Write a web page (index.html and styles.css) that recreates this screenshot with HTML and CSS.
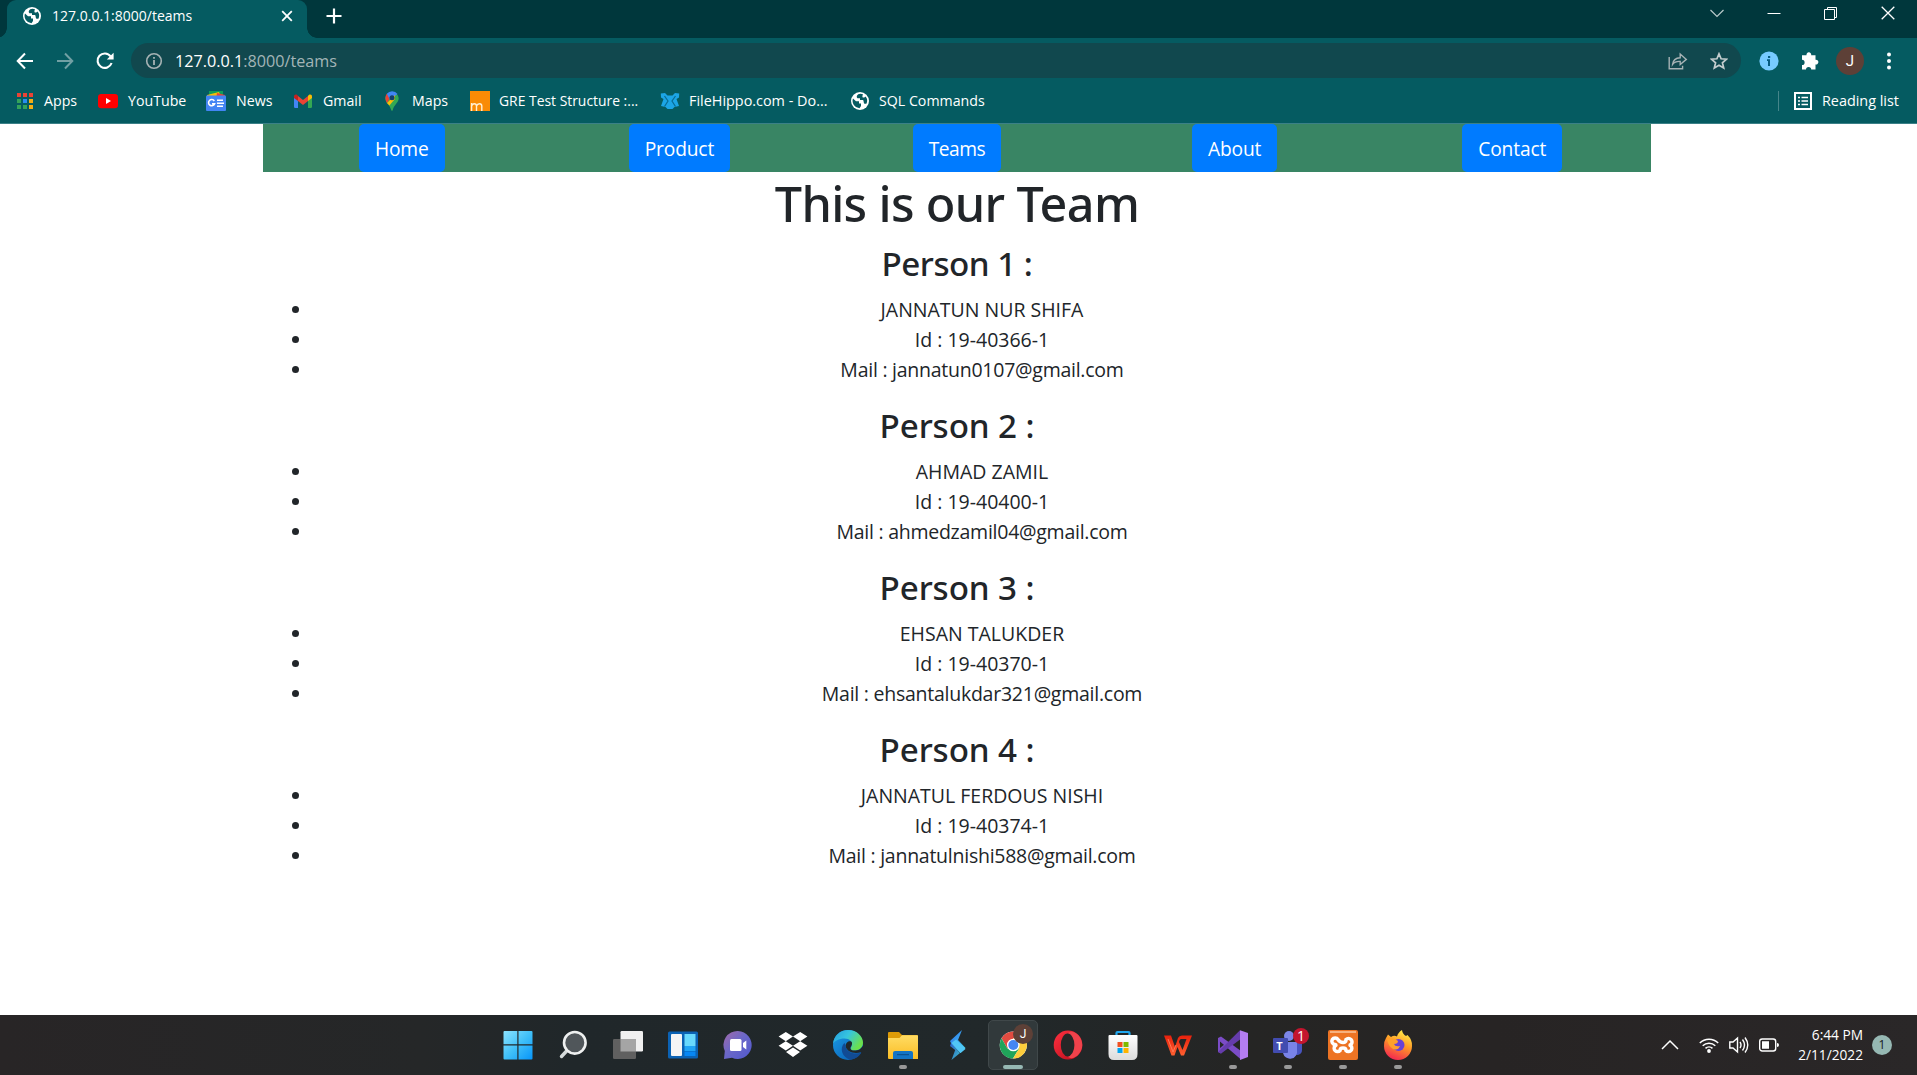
FILE: index.html
```html
<!DOCTYPE html>
<html lang="en">
<head>
<meta charset="utf-8">
<title>127.0.0.1:8000/teams</title>
<link rel="stylesheet" href="styles.css">
</head>
<body>
<svg width="0" height="0" class="defs" aria-hidden="true">
  <defs>
    <symbol id="globe" viewBox="0 0 18 18">
      <circle cx="9" cy="9" r="9" fill="#fff"/>
      <path d="M2 6.5 L5 9.2 H8 V11.5 H10 V14 L8.5 16.2 A7.3 7.3 0 0 1 2 6.5Z M7.2 2.2 C5.5 3.6 5.2 5.3 6.5 6.3 H9 V8 H12 C13 9 12.3 10.5 13.4 11.8 H15.4 A7.3 7.3 0 0 0 14.7 4.5 C13.5 6.2 11.5 5.8 11.4 4.4 C11.5 3.2 12 2.5 12 2.3 A7.3 7.3 0 0 0 7.2 2.2Z" fill="#055b61"/>
    </symbol>
    <linearGradient id="win" x1="0" y1="0" x2="1" y2="1"><stop offset="0" stop-color="#8ce3ff"/><stop offset=".5" stop-color="#41c0f8"/><stop offset="1" stop-color="#0795f9"/></linearGradient>
    <linearGradient id="chat" x1="0" y1="0" x2="1" y2="1"><stop offset="0" stop-color="#a269a8"/><stop offset=".45" stop-color="#6c68c8"/><stop offset="1" stop-color="#4f58cf"/></linearGradient>
    <linearGradient id="edgeTop" x1="0" y1="0" x2="1" y2=".5"><stop offset="0" stop-color="#249bde"/><stop offset=".5" stop-color="#36c5df"/><stop offset="1" stop-color="#6be04c"/></linearGradient>
    <linearGradient id="edgeBlue" x1="0" y1="0" x2="1" y2="1"><stop offset="0" stop-color="#1b9ce6"/><stop offset="1" stop-color="#0758ae"/></linearGradient>
    <linearGradient id="folder" x1="0" y1="0" x2="0" y2="1"><stop offset="0" stop-color="#ffdc64"/><stop offset="1" stop-color="#fbbd24"/></linearGradient>
    <linearGradient id="bolt" x1="0" y1="0" x2="1" y2="1"><stop offset="0" stop-color="#2e6bea"/><stop offset="1" stop-color="#45e0f2"/></linearGradient>
    <linearGradient id="bag" x1="0" y1="0" x2="0" y2="1"><stop offset="0" stop-color="#fff"/><stop offset="1" stop-color="#dcdcdc"/></linearGradient>
    <linearGradient id="opera" x1="0" y1="0" x2="1" y2="1"><stop offset="0" stop-color="#ff3140"/><stop offset="1" stop-color="#b80b1a"/></linearGradient>
    <linearGradient id="wps" x1="0" y1="0" x2="0" y2="1"><stop offset="0" stop-color="#e8200c"/><stop offset="1" stop-color="#ff6030"/></linearGradient>
    <linearGradient id="fox" x1=".7" y1="0" x2=".3" y2="1"><stop offset="0" stop-color="#fff04a"/><stop offset=".45" stop-color="#ff9826"/><stop offset="1" stop-color="#f32353"/></linearGradient>
  </defs>
</svg>

<header class="browser">
  <div class="tabstrip">
    <div class="tab">
      <svg class="i18"><use href="#globe"/></svg>
      <span class="tab-title">127.0.0.1:8000/teams</span>
      <svg class="tab-close" width="12" height="12" viewBox="0 0 12 12"><path d="M1.2 1.2L10.8 10.8M10.8 1.2L1.2 10.8" stroke="#fff" stroke-width="1.8"/></svg>
    </div>
    <svg class="new-tab" width="16" height="16" viewBox="0 0 16 16"><path d="M8 .5V15.5M.5 8H15.5" stroke="#fff" stroke-width="2.2"/></svg>
    <div class="window-buttons">
      <svg width="14" height="14" viewBox="0 0 14 14"><path d="M.5 4L7 10.5L13.5 4" fill="none" stroke="#b9cacb" stroke-width="1.2"/></svg>
      <svg width="14" height="14" viewBox="0 0 14 14"><path d="M.5 7.5H13.5" stroke="#fff"/></svg>
      <svg width="14" height="14" viewBox="0 0 14 14"><path d="M.5 3.5H10.5V13.5H.5ZM3.5 3.5V1.5H12.500V11.5H10.5" fill="none" stroke="#fff"/></svg>
      <svg width="14" height="14" viewBox="0 0 14 14"><path d="M.7.7L13.3 13.3M13.3.7L.7 13.3" stroke="#fff" stroke-width="1.3"/></svg>
    </div>
  </div>

  <div class="toolbar">
    <svg width="18" height="18" viewBox="0 0 18 18"><path d="M17 9H2M9 1.5L1.7 9L9 16.5" fill="none" stroke="#fff" stroke-width="2"/></svg>
    <svg width="18" height="18" viewBox="0 0 18 18"><path d="M1 9H16M9 1.5L16.3 9L9 16.5" fill="none" stroke="#71a0a4" stroke-width="2"/></svg>
    <svg width="18" height="18" viewBox="0 0 18 18"><path d="M15.6 11A7.2 7.2 0 1 1 14.6 4.4" fill="none" stroke="#fff" stroke-width="2.1"/><path d="M17.6.8V7.6H10.8Z" fill="#fff"/></svg>
    <div class="omnibox">
      <svg width="18" height="18" viewBox="0 0 18 18"><circle cx="9" cy="9" r="7.3" fill="none" stroke="#a6b2b4" stroke-width="1.6"/><path d="M9 8V13M9 5V6.7" stroke="#a6b2b4" stroke-width="1.8"/></svg>
      <span class="url">127.0.0.1<span class="path">:8000/teams</span></span>
      <svg width="20" height="18" viewBox="0 0 20 18"><path d="M1.2 5V16.7H14.6V13.8M4.6 12.4C5 8.5 7.8 6 12.2 5.8V2L18.3 7.4L12.2 12.6V9.4C8.8 9.2 6.3 10 4.6 12.4Z" fill="none" stroke="#a6b2b4" stroke-width="1.4"/></svg>
      <svg width="18" height="18" viewBox="0 0 18 18"><path d="M9 1.8L11.1 6.8L16.5 7.2L12.4 10.8L13.7 16L9 13.2L4.3 16L5.6 10.8L1.5 7.2L6.9 6.8Z" fill="none" stroke="#c4cdce" stroke-width="1.7"/></svg>
    </div>
    <svg class="ext" width="20" height="20" viewBox="0 0 20 20"><circle cx="10" cy="10" r="9.6" fill="#77cbff"/><path d="M8 8.3H11V15H9V10H8Z M9 5H11.2V7H9Z" fill="#055b80"/></svg>
    <svg class="ext" width="20" height="20" viewBox="0 0 20 20"><path d="M2 4.2H6.5A2.4 2.4 0 1 1 11.2 4.2H15.5V8.7A2.4 2.4 0 1 1 15.5 13.4V18.5H11.2A2.6 2.6 0 0 0 6 18.5H2V14A2.6 2.6 0 0 0 2 8.8Z" fill="#fff"/></svg>
    <span class="avatar">J</span>
    <svg class="dots" width="6" height="18" viewBox="0 0 6 18"><circle cx="3" cy="2.5" r="2" fill="#fff"/><circle cx="3" cy="9" r="2" fill="#fff"/><circle cx="3" cy="15.5" r="2" fill="#fff"/></svg>
  </div>

  <div class="bookmarks">
    <div class="bm bm-apps"><svg width="20" height="20" viewBox="0 0 20 20"><path d="M2 2H6V6H2ZM8 2H12V6H8ZM14 2H18V6H14Z" fill="#ea4335"/><path d="M2 8H6V12H2ZM2 14H6V18H2ZM8 14H12V18H8Z" fill="#34a35a"/><path d="M8 8H12V12H8Z" fill="#2a8cf0"/><path d="M14 8H18V12H14ZM14 14H18V18H14Z" fill="#f5ad13"/></svg><span>Apps</span></div>
    <div class="bm bm-youtube"><svg width="20" height="20" viewBox="0 0 20 20"><rect y="3" width="20" height="14.2" rx="3.2" fill="#f00"/><path d="M8 7L13 10L8 13Z" fill="#fff"/></svg><span>YouTube</span></div>
    <div class="bm bm-news"><svg width="20" height="20" viewBox="0 0 20 20"><path d="M3 0H17V6H3Z" fill="#0f9d58"/><path d="M1 4L13 1L15 6H1Z" fill="#fbbc04"/><path d="M11 2L19 4L18 8H10Z" fill="#ea4335"/><rect y="4.4" width="20" height="15.6" rx="1" fill="#4285f4"/><path d="M8.3 10A3.1 3.1 0 1 0 8.6 12.7H6" fill="none" stroke="#fff" stroke-width="1.6"/><path d="M11 9.3H17M11 12.3H18M11 15.2H17" stroke="#fff" stroke-width="1.6"/></svg><span>News</span></div>
    <div class="bm bm-gmail"><svg width="20" height="20" viewBox="0 0 20 20"><path d="M1 5L5 7.5V17H2.2A1.2 1.2 0 0 1 1 15.8Z" fill="#4285f4"/><path d="M19 5L15 7.5V17H17.8A1.2 1.2 0 0 0 19 15.8Z" fill="#34a853"/><path d="M5 5L10 9L15 5V10L10 14L5 10Z" fill="#ea4335"/><path d="M15 5C16.6 2.6 19 3.5 19 5.5V7L15 10Z" fill="#fbbc04"/><path d="M5 5C3.4 2.6 1 3.5 1 5.5V7L5 10Z" fill="#c5221f"/></svg><span>Gmail</span></div>
    <div class="bm bm-maps"><svg width="20" height="20" viewBox="0 0 20 20"><path d="M3.3 7A6.8 6.8 0 0 1 16.7 7C16.7 12 12 13.5 10.7 19.2Q10 20.4 9.3 19.2C8 14 3.3 12 3.3 7Z" fill="#34a853"/><path d="M4.8 2.8L8 7L5 12C3.5 9.5 2.4 6 4.8 2.8Z" fill="#ea4335"/><path d="M4.8 2.8A6.8 6.8 0 0 1 15.5 3L8 9Z" fill="#4285f4"/><path d="M5 12L13 4L12.5 8.5L7.4 14.4Z" fill="#fbbc04"/><circle cx="10" cy="6.8" r="2.5" fill="#163f69"/></svg><span>Maps</span></div>
    <div class="bm bm-gre"><svg width="20" height="20" viewBox="0 0 20 20"><path d="M0 0H20V20H0Z" fill="#f98b06"/><path d="M1.6 20V12M1.6 15C2.4 12 6.5 12 6.5 15V20M6.5 15C7.5 12 11.8 12 11.8 15V20" fill="none" stroke="#fff0d5" stroke-width="1.4"/></svg><span>GRE Test Structure :...</span></div>
    <div class="bm bm-hippo"><svg width="20" height="20" viewBox="0 0 20 20"><path d="M.8 2.500L5 2L7.500 4.500H12.500L15 2L19.200 2.500L19 6.500L16.500 8L19 15L14.500 16L12.500 18H7.500L5.500 16L1 15L3.500 8L1 6.500Z" fill="#1ca5e6"/><path d="M4.500 5L8 10L4.500 15.500M15.500 5L12 10L15.500 15.500" fill="none" stroke="#086b93" stroke-width="1.2"/></svg><span>FileHippo.com - Do...</span></div>
    <div class="bm bm-sql"><svg class="i18"><use href="#globe"/></svg><span>SQL Commands</span></div>
    <div class="reading"><svg width="18" height="18" viewBox="0 0 18 18"><path d="M1 1H17V17H1Z" fill="none" stroke="#fff" stroke-width="2"/><path d="M4 5.5H6M4 9H6M4 12.5H6M7.5 5.5H14M7.5 9H14M7.5 12.5H14" stroke="#fff" stroke-width="1.7"/></svg><span>Reading list</span></div>
  </div>
</header>

<main class="page">
  <div class="container">
    <nav class="nav">
      <div class="col"><a class="btn">Home</a></div>
      <div class="col"><a class="btn">Product</a></div>
      <div class="col"><a class="btn teams">Teams</a></div>
      <div class="col"><a class="btn">About</a></div>
      <div class="col"><a class="btn">Contact</a></div>
    </nav>
    <h1>This is our Team</h1>
    <h3 class="first">Person 1 :</h3>
    <ul><li>JANNATUN NUR SHIFA</li><li>Id : 19-40366-1</li><li class="mail">Mail : jannatun0107@gmail.com</li></ul>
    <h3>Person 2 :</h3>
    <ul><li>AHMAD ZAMIL</li><li>Id : 19-40400-1</li><li class="mail">Mail : ahmedzamil04@gmail.com</li></ul>
    <h3>Person 3 :</h3>
    <ul><li>EHSAN TALUKDER</li><li>Id : 19-40370-1</li><li class="mail">Mail : ehsantalukdar321@gmail.com</li></ul>
    <h3>Person 4 :</h3>
    <ul><li>JANNATUL FERDOUS NISHI</li><li>Id : 19-40374-1</li><li class="mail">Mail : jannatulnishi588@gmail.com</li></ul>
  </div>
</main>

<footer class="taskbar">
  <div class="apps">
    <div class="app"><svg viewBox="0 0 30 30"><path d="M1.5 1H14.3V14.3H.5V2Q.5 1 1.5 1ZM15.5 1H28.5Q29.5 1 29.5 2V14.3H15.5ZM.5 15.5H14.3V29.5H1.5Q.5 29.5.5 28.5ZM15.5 15.5H29.5V28.5Q29.5 29.5 28.5 29.5H15.5Z" fill="url(#win)"/></svg></div>
    <div class="app"><svg viewBox="0 0 30 30"><path d="M9.5 20L3.5 26.5" stroke="#d5dada" stroke-width="3.4" stroke-linecap="round"/><circle cx="16.8" cy="12.8" r="10.8" fill="#50565a" stroke="#eef0f0" stroke-width="2.6"/></svg></div>
    <div class="app"><svg viewBox="0 0 30 30"><rect x="7.5" y="1" width="22.5" height="20.5" rx="1.2" fill="#f0f0f0"/><rect x="0" y="9" width="23" height="20" rx="1.2" fill="#606060"/><path d="M7.5 9H23V21.5H7.5Z" fill="#a5a5a5"/></svg></div>
    <div class="app"><svg viewBox="0 0 30 30"><rect x="0" y="1.5" width="30" height="27" rx="1.5" fill="#0b62b4"/><rect x="3" y="4" width="11" height="22" rx="1" fill="#f5f5f5"/><path d="M16.5 4H27.5V16H16.5Z" fill="#68d9fd"/><path d="M16.5 16H27.5V21H16.5Z" fill="#20a4f5"/><path d="M16.5 21.5H27.5V26H16.5Z" fill="#0787f3"/></svg></div>
    <div class="app"><svg viewBox="0 0 30 30"><path d="M15 1A14 14 0 1 1 9 27.8L1 29L1.8 21A14 14 0 0 1 15 1Z" fill="url(#chat)"/><rect x="7" y="9" width="11.5" height="12" rx="1.5" fill="#fff"/><path d="M20 13L23.3 10.5V19.5L20 17Z" fill="#fff"/></svg></div>
    <div class="app"><svg viewBox="0 0 30 30"><path d="M7.8 2L15 6.6L7.8 11.2L.6 6.6ZM22.2 2L29.4 6.6L22.2 11.2L15 6.6ZM7.8 11.2L15 15.8L7.8 20.4L.6 15.8ZM22.2 11.2L29.4 15.8L22.2 20.4L15 15.8ZM15 17.4L22 22L15 27L8 22Z" fill="#fff"/></svg></div>
    <div class="app"><svg viewBox="0 0 30 30"><circle cx="15" cy="15" r="15" fill="url(#edgeBlue)"/><path d="M0 14C1 5 7.5 0 15 0C24 0 30 6.5 30 12.5C30 18 26 20.5 21 20.5C17.5 20.5 17 18.5 18.5 16.5C20.5 12 16.5 8.5 11.5 8.5C6 8.5 1 11 0 14Z" fill="url(#edgeTop)"/><path d="M11.5 13C6 18 9 28 18 29.7C22.5 29 26.5 26 28.5 22.5C22 25.5 12 22 12.5 15Z" fill="#114b94"/><path d="M18.5 11.8C20 14 18 16.3 17.3 18C17.3 20.5 22 21.8 27 19.2L30 16V23L27.8 22.3C21 24.5 12.5 21.5 12.7 15.6C13 12 16 10.4 18.5 11.8Z" fill="#21272a"/></svg></div>
    <div class="app running"><svg viewBox="0 0 30 30"><path d="M0 3Q0 2 1 2H11L14 5H29Q30 5 30 6V12H0Z" fill="#dd9b08"/><path d="M0 8H11.5L14 5.2H29Q30 5.2 30 6.2V29H1Q0 29 0 28Z" fill="url(#folder)"/><path d="M5 29V23Q5 21 7 21H23Q25 21 25 23V29Z" fill="#1274c5"/><path d="M9 24.7H21" stroke="#0a4a86"/></svg></div>
    <div class="app"><svg viewBox="0 0 30 30"><path d="M19 0L7 11L8.5 14L17.5 23L22.5 18L15 10Z" fill="url(#bolt)"/><path d="M8 13L17 23L8.5 30L12.2 20L7 16Z" fill="url(#bolt)" opacity=".8"/><path d="M13 9.5L22.5 19L17.5 23L8.5 13Z" fill="#51c6f5"/></svg></div>
    <div class="app active"><svg viewBox="0 0 30 30"><circle cx="15.3" cy="15" r="13.6" fill="#fff"/><path d="M3.5 8.2A13.6 13.6 0 0 1 27 8.2H15.3L9.4 18.4Z" fill="#e14b40"/><path d="M3.5 8.2A13.6 13.6 0 0 0 15 28.6L21.2 18.4H9.4Z" fill="#20a45a"/><path d="M15 28.6A13.6 13.6 0 0 0 27 8.2H15.3L21.2 18.4Z" fill="#fdcd3c"/><circle cx="15.3" cy="15" r="6.3" fill="#fff"/><circle cx="15.3" cy="15" r="5" fill="#4586f3"/></svg><span class="profile">J</span></div>
    <div class="app"><svg viewBox="0 0 30 30"><ellipse cx="15" cy="15" rx="14.3" ry="14.5" fill="url(#opera)"/><path d="M15 3C20 -1 29.3 6 29.3 15S20 31 15 27C22 23 22 7 15 3Z" fill="#f0424b"/><ellipse cx="14.6" cy="15" rx="6.8" ry="11.4" fill="#252727"/></svg></div>
    <div class="app"><svg viewBox="0 0 30 30"><path d="M8.5 6V3Q8.5 2 9.5 2H20.5Q21.5 2 21.5 3V6" fill="none" stroke="#20a7ef" stroke-width="2.2"/><path d="M.5 6Q.5 5 1.5 5H28.5Q29.5 5 29.5 6V24Q29.5 30 24 30H6Q.5 30 .5 24Z" fill="url(#bag)"/><path d="M9.5 12H14.5V17H9.5Z" fill="#f15022"/><path d="M15.5 12H20.5V17H15.5Z" fill="#7fba00"/><path d="M9.5 18H14.5V23H9.5Z" fill="#00a4ef"/><path d="M15.5 18H20.5V23H15.5Z" fill="#fdb400"/></svg></div>
    <div class="app"><svg viewBox="0 0 30 30"><path d="M1 5.5H8L12 17L15 8Q16 5.5 19 5.5H29L21 25.5H18L14.5 17L11.5 25.5H8.5ZM16 12L19.5 20L23.5 9H18Q16.5 9 16 12Z" fill="url(#wps)" fill-rule="evenodd"/><path d="M5 9L10 22L13 15" fill="none" stroke="#ff7955"/></svg></div>
    <div class="app running"><svg viewBox="0 0 30 30"><path d="M0 8L3 6.5L23 21V29.5L2 11.5V18L7 14L10 17L3 23.5L0 22Z" fill="#7b4cc6"/><path d="M3 23.5L0 22L22 .2L23.5 8.5Z" fill="#653cac"/><path d="M22 .2L30 3V27L22 30Z" fill="#b47df2"/></svg></div>
    <div class="app running"><svg viewBox="0 0 30 30"><circle cx="16" cy="6" r="5" fill="#7c86e8"/><path d="M20 12H29V20A5 5 0 0 1 20 23Z" fill="#4854c0"/><path d="M10 12H24V20A7 7 0 0 1 10 23Z" fill="#7983e8"/><rect y="8" width="15" height="15" rx="1" fill="#424cb0"/></svg><span class="letter">T</span><span class="count">1</span></div>
    <div class="app running"><svg viewBox="0 0 30 30"><rect width="30" height="30" rx="2" fill="#ed7424"/><path d="M2 1H28V3H2Z" fill="#f7b17e"/><path d="M10 9.5A3.3 3.3 0 1 0 7 14.5Q9 15 7 16A3.3 3.3 0 1 0 12 20.5Q12 18 15 18T18 20.5A3.3 3.3 0 1 0 23 16Q21 15 23 14.5A3.3 3.3 0 1 0 18 9.5Q18 12.5 15 12.5T10 9.5Z" fill="none" stroke="#fff" stroke-width="3.5"/></svg></div>
    <div class="app running"><svg viewBox="0 0 30 30"><path d="M3 8L5 4.5L8 7Q11 5 14 6.5Q15 2.5 19 0Q19.5 4 23 6L24.5 5Q29.500 10 29 16A14 14 0 0 1 1 16Q1 11 3 8Z" fill="url(#fox)"/><circle cx="15.5" cy="15" r="6" fill="#6941d4"/><path d="M4 9Q11 7 15 11Q15 14 11 14Q12 17 17 16Q15 21 10 19Q5 16 4 9Z" fill="#ffa02b"/></svg></div>
  </div>
  <div class="tray">
    <svg class="chevron" width="18" height="18" viewBox="0 0 18 18"><path d="M1 13L9 5L17 13" fill="none" stroke="#fff" stroke-width="1.5"/></svg>
    <svg class="wifi" width="20" height="18" viewBox="0 0 20 18"><path d="M.8 7A13 13 0 0 1 19.2 7M3.7 9.8A9 9 0 0 1 16.3 9.8M6.5 12.4A5 5 0 0 1 13.5 12.4" fill="none" stroke="#fff" stroke-width="1.5"/><circle cx="10" cy="15" r="1.9" fill="#fff"/></svg>
    <svg class="sound" width="20" height="18" viewBox="0 0 20 18"><path d="M.8 6H4L8.5 2V16L4 12H.8ZM11 6Q13 9 11 12M13.5 3.5Q17.5 9 13.5 14.5M16 1.5Q21.5 9 16 16.5" fill="none" stroke="#fff" stroke-width="1.4"/></svg>
    <svg class="battery" width="20" height="18" viewBox="0 0 20 18"><rect x=".7" y="3" width="16" height="12" rx="2.5" fill="none" stroke="#fff" stroke-width="1.4"/><path d="M3 5.3H10V12.7H3Z M18 7Q20 7 20 9T18 11Z" fill="#fff"/></svg>
    <div class="clock"><span>6:44 PM</span><span>2/11/2022</span></div>
    <span class="notice">1</span>
  </div>
</footer>
</body>
</html>
```
FILE: styles.css
```css
* { box-sizing: border-box; }
body {
  margin: 0;
  height: 1075px;
  display: flex;
  flex-direction: column;
  overflow: hidden;
  background: #fff;
  color: #212529;
  font-family: "Open Sans", "Noto Sans", sans-serif;
}
svg { display: block; flex: none; }
.defs { position: absolute; }
.i18 { width: 18px; height: 18px; }

/* Browser window */
.browser {
  height: 124px;
  flex: none;
  background: #055b61;
  border-bottom: 1px solid #3b8087;
  color: #fff;
}
.tabstrip {
  height: 38px;
  display: flex;
  align-items: flex-start;
  padding-left: 7px;
  background: #00373c;
}
.tab {
  position: relative;
  width: 300px;
  height: 38px;
  display: flex;
  align-items: center;
  padding: 0 14px 6px 16px;
  border-radius: 9px 9px 0 0;
  background: #055b61;
}
.tab::before, .tab::after {
  content: "";
  position: absolute;
  bottom: 0;
  width: 10px;
  height: 10px;
}
.tab::before { left: -10px; background: radial-gradient(circle at 0 0, transparent 9.5px, #055b61 10px); }
.tab::after { right: -10px; background: radial-gradient(circle at 100% 0, transparent 9.5px, #055b61 10px); }
.tab-title { margin: -1px 0 1px 11px; font-size: 14px; flex: 1; white-space: nowrap; }
.new-tab { margin: 8px 0 0 19px; }
.window-buttons { display: flex; gap: 43px; margin: 6px 22px 0 auto; }

.toolbar { height: 45px; display: flex; align-items: center; padding-left: 16px; }
.toolbar > svg:nth-child(2), .toolbar > svg:nth-child(3) { margin-left: 22px; }
.toolbar > svg:nth-child(3) { margin-right: -1px; }
.omnibox {
  width: 1610px;
  height: 35px;
  margin-left: 18px;
  display: flex;
  align-items: center;
  padding: 0 13px 0 14px;
  border-radius: 18px;
  background: #11484e;
}
.omnibox svg:nth-of-type(3) { margin-left: 22px; }
.url { margin-left: 12px; flex: 1; font-size: 16.2px; line-height: 24px; }
.path { color: #a3b5b7; }
.ext { margin-left: 18px; }
.ext + .ext { margin-left: 21px; }
.avatar {
  width: 28px;
  height: 28px;
  margin-left: 16px;
  border-radius: 50%;
  background: #5d4037;
  font: 15px/28px Roboto, sans-serif;
  text-align: center;
}
.dots { margin-left: 22px; }

.bookmarks { height: 40px; display: flex; align-items: center; padding: 0 18px 4px 15px; font-size: 14.2px; line-height: 20px; white-space: nowrap; }
.bm { display: flex; align-items: center; gap: 9px; }
.bm-apps { width: 83px; }
.bm-youtube { width: 108px; gap: 10px; }
.bm-news { width: 87px; gap: 10px; }
.bm-gmail { width: 89px; gap: 10px; }
.bm-maps { width: 88px; gap: 10px; }
.bm-gre { width: 190px; font-size: 13.9px; }
.bm-hippo { width: 191px; font-size: 14.4px; }
.bm-sql { gap: 10px; }
.reading {
  height: 20px;
  margin-left: auto;
  padding-left: 15px;
  display: flex;
  align-items: center;
  gap: 10px;
  border-left: 1px solid #45858a;
  font-size: 14.4px;
}

/* Team page */
.page { flex: 1; min-height: 0; }
.container { width: 1388px; margin-left: 263px; text-align: center; }
.nav { height: 48px; display: grid; grid-template-columns: repeat(5, 1fr); background: #398564; }
.col { display: flex; justify-content: center; }
.btn {
  height: 48px;
  padding: 0 16px;
  border-radius: 5px;
  background: #007bff;
  color: #fff;
  font-size: 19.2px;
  line-height: 49px;
  letter-spacing: -.15px;
}
.teams { letter-spacing: -.5px; }
h1, h3 { margin: 0; font-family: "Noto Sans", "Open Sans", sans-serif; font-weight: 500; }
h1 { height: 71px; font-size: 48.5px; line-height: 62px; letter-spacing: -.65px; }
h3 { height: 52px; font-size: 33.2px; line-height: 42px; letter-spacing: -.1px; }
.first { letter-spacing: -.5px; }
ul { margin: 0 0 20px; padding-left: 50px; }
li { height: 30px; font-size: 19.5px; line-height: 30px; }
.mail { letter-spacing: -.25px; }

/* Windows taskbar */
.taskbar {
  position: relative;
  height: 60px;
  flex: none;
  display: flex;
  justify-content: space-between;
  padding: 0 25px 0 490px;
  background: linear-gradient(90deg, #282526 0, #252728 22%, #20272a 30%, #21282a 52%, #252524 65%, #272424 78%, #2a2728 100%);
  color: #fff;
}
.apps { display: flex; }
.app { position: relative; width: 55px; height: 60px; padding: 15px 12.5px; flex: none; }
.app svg { position: relative; width: 30px; height: 30px; }
.running::after, .active::after {
  content: "";
  position: absolute;
  bottom: 6px;
  left: 23.5px;
  width: 8px;
  height: 4px;
  border-radius: 2px;
  background: #999;
}
.active::before {
  content: "";
  position: absolute;
  inset: 5px 2.5px;
  border: 1px solid #40484a;
  border-radius: 5px;
  background: #31393b;
}
.active::after { left: 17.5px; width: 20px; background: #96b8b3; }
.profile, .count, .letter { position: absolute; text-align: center; }
.profile { left: 28px; top: 9px; width: 20px; height: 20px; border-radius: 50%; background: #5d4037; font: 12px/20px Roboto, sans-serif; }
.letter { left: 12px; top: 23px; width: 15px; font-size: 11px; line-height: 15px; font-weight: 700; }
.count { left: 33px; top: 13px; width: 16px; height: 16px; border-radius: 50%; background: #c4152e; font-size: 14px; line-height: 16px; }
.tray { display: flex; align-items: center; }
.wifi { margin-left: 20px; }
.sound { margin-left: 10px; }
.battery { margin-left: 10px; }
.clock { width: 84px; display: flex; flex-direction: column; align-items: flex-end; font-size: 13.7px; line-height: 20px; }
.notice { width: 20px; height: 20px; margin-left: 9px; border-radius: 50%; background: #96b8b3; color: #172123; font-size: 12px; line-height: 20px; text-align: center; }
```
